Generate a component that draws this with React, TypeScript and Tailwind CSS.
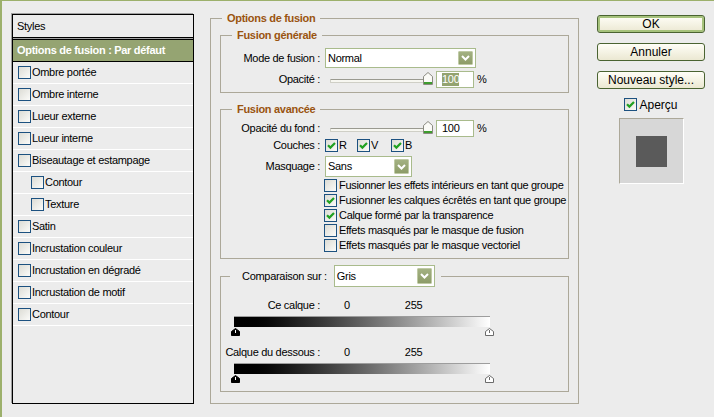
import React from "react";

const styleRows: [string, boolean][] = [
  ["Ombre portée", false],
  ["Ombre interne", false],
  ["Lueur externe", false],
  ["Lueur interne", false],
  ["Biseautage et estampage", false],
  ["Contour", true],
  ["Texture", true],
  ["Satin", false],
  ["Incrustation couleur", false],
  ["Incrustation en dégradé", false],
  ["Incrustation de motif", false],
  ["Contour", false],
];

const maskOptions: [string, boolean][] = [
  ["Fusionner les effets intérieurs en tant que groupe", false],
  ["Fusionner les calques écrêtés en tant que groupe", true],
  ["Calque formé par la transparence", true],
  ["Effets masqués par le masque de fusion", false],
  ["Effets masqués par le masque vectoriel", false],
];

function Check({ on = false }: { on?: boolean }) {
  return (
    <span className="w-[13px] h-[13px] shrink-0 border border-[#1c5180] bg-gradient-to-br from-[#dcdcd5] to-[#fbfbf9] flex items-center justify-center">
      {on && (
        <svg width="9" height="9" viewBox="0 0 9 9">
          <path d="M1 4.2 L3.4 6.6 L8 2" stroke="#21a121" strokeWidth="2.2" fill="none" />
        </svg>
      )}
    </span>
  );
}

function Combo({ value, className }: { value: string; className: string }) {
  return (
    <div className={`flex items-stretch bg-white border border-[#a9bb8c] p-[2px] ${className}`}>
      <span className="flex-1 flex items-center">{value}</span>
      <span className="w-[15px] flex items-center justify-center bg-gradient-to-b from-[#a3b182] to-[#8d9c68] border border-[#bfcaa5] rounded-[1px]">
        <svg width="9" height="6" viewBox="0 0 9 6">
          <path d="M1 1 L4.5 4.5 L8 1" stroke="#fff" strokeWidth="2" fill="none" />
        </svg>
      </span>
    </div>
  );
}

function Slider() {
  return (
    <div className="relative w-[108px] h-[18px]">
      <div className="absolute left-[5px] right-[5px] top-[9px] h-[4px] border border-[#cfcfc6] border-t-[#9a9a90] bg-[#f7f7f1] rounded-[1px]" />
      <svg className="absolute left-[98px] top-[2px]" width="10" height="13" viewBox="0 0 10 13">
        <path d="M0.5 4.5 L5 0.5 L9.5 4.5 V12.5 H0.5 Z" fill="#fbfbf7" stroke="#8a8a80" />
        <rect x="1" y="10" width="8" height="2" fill="#3e9c2e" />
      </svg>
    </div>
  );
}

function Field({ children, highlight = false }: { children: string; highlight?: boolean }) {
  return (
    <div className="ml-[3px] w-[38px] h-[17px] border border-[#a9bb8c] bg-white flex items-center pl-[5px]">
      <span className={highlight ? "bg-[#93a36f] text-white leading-[13px]" : "leading-[13px]"}>{children}</span>
    </div>
  );
}

function Thumb({ dark = false }: { dark?: boolean }) {
  return dark ? (
    <svg width="9" height="8" viewBox="0 0 9 8">
      <path d="M0.5 3.5 L4.5 0.5 L8.5 3.5 V7.5 H0.5 Z" fill="#000" stroke="#000" />
      <rect x="4" y="2" width="1" height="3" fill="#fff" />
    </svg>
  ) : (
    <svg width="9" height="8" viewBox="0 0 9 8">
      <path d="M0.5 3.5 L4.5 0.5 L8.5 3.5 V7.5 H0.5 Z" fill="#fff" stroke="#6b6b6b" />
      <rect x="4" y="2" width="1" height="3" fill="#6b6b6b" />
    </svg>
  );
}

function Ramp() {
  return (
    <>
      <div className="ml-[13px] w-[256px] h-[11px] border-t border-[#9d9d9d] bg-gradient-to-r from-black to-white" />
      <div className="ml-[10px] w-[263px] h-[9px] pt-[1px] flex justify-between">
        <Thumb dark />
        <Thumb />
      </div>
    </>
  );
}

const legend = "font-bold text-[#9a5410] leading-[13px]";

export default function App() {
  return (
    <div className="w-[714px] h-[417px] bg-[#ececec] border-t border-l-2 border-[#9cb06b] flex items-start overflow-hidden text-[11px] text-black font-['Liberation_Sans',Arial,sans-serif] tracking-[-0.3px]">
      {/* styles list */}
      <div className="mt-[13px] ml-[10px] w-[182px] h-[390px] shrink-0 border border-black shadow-[-1px_-1px_0_#a0a0a0] flex flex-col">
        <div className="h-[22px] flex items-center pl-[4px]">Styles</div>
        <div className="h-[3px] border-y border-black bg-[#a0a0a0]" />
        <div className="h-[22px] flex items-center pl-[4px] bg-[#95a472] border-b border-black text-white font-bold">
          Options de fusion : Par défaut
        </div>
        {styleRows.map(([label, sub], i) => (
          <div
            key={i}
            className={`h-[22px] flex items-center gap-[1px] border-b border-white ${sub ? "pl-[18px]" : "pl-[5px]"}`}
          >
            <Check />
            <span>{label}</span>
          </div>
        ))}
      </div>

      {/* options de fusion */}
      <fieldset className="ml-[16px] mt-[11px] w-[369px] h-[392px] shrink-0 border border-[#aca899] pb-[9px]">
        <legend className={`ml-[11px] px-[5px] ${legend}`}>Options de fusion</legend>

        <fieldset className="mx-[9px] mt-[4px] border border-[#aca899] pb-[4px]">
          <legend className={`ml-[11px] px-[5px] ${legend}`}>Fusion générale</legend>
          <div className="mt-[6px] flex items-center">
            <span className="w-[99px] text-right">Mode de fusion :</span>
            <Combo value="Normal" className="ml-[5px] w-[151px] h-[20px]" />
          </div>
          <div className="mt-[2px] flex items-center">
            <span className="w-[99px] text-right">Opacité :</span>
            <span className="ml-[5px] flex items-center">
              <Slider />
              <Field highlight>100</Field>
              <span className="ml-[3px]">%</span>
            </span>
          </div>
        </fieldset>

        <fieldset className="mx-[9px] mt-[10px] border border-[#aca899] pb-[5px]">
          <legend className={`ml-[11px] px-[5px] ${legend}`}>Fusion avancée</legend>
          <div className="mt-[3px] flex items-center">
            <span className="w-[99px] text-right">Opacité du fond :</span>
            <span className="ml-[5px] flex items-center">
              <Slider />
              <Field>100</Field>
              <span className="ml-[3px]">%</span>
            </span>
          </div>
          <div className="h-[17px] flex items-center">
            <span className="w-[99px] text-right">Couches :</span>
            <span className="ml-[5px] w-[32px] flex items-center gap-[1px]">
              <Check on />R
            </span>
            <span className="w-[34px] flex items-center gap-[1px]">
              <Check on />V
            </span>
            <span className="flex items-center gap-[1px]">
              <Check on />B
            </span>
          </div>
          <div className="mt-[2px] flex items-center">
            <span className="w-[99px] text-right">Masquage :</span>
            <Combo value="Sans" className="ml-[5px] w-[87px] h-[21px]" />
          </div>
          <div className="mt-[1px] flex flex-col">
            {maskOptions.map(([label, on], i) => (
              <div key={i} className="h-[15px] ml-[103px] flex items-center gap-[2px] whitespace-nowrap">
                <Check on={on} />
                <span>{label}</span>
              </div>
            ))}
          </div>
        </fieldset>

        <fieldset className="mx-[9px] mt-[6px] border border-[#aca899] pb-[8px]">
          <legend className="ml-[9px] pl-[12px] pr-[6px]">
            <span className="flex items-center">
              <span>Comparaison sur :</span>
              <Combo value="Gris" className="ml-[7px] w-[101px] h-[22px]" />
            </span>
          </legend>
          <div className="mt-[11px] h-[14px] flex items-center">
            <span className="w-[99px] text-right">Ce calque :</span>
            <span className="ml-[24px]">0</span>
            <span className="ml-[55px]">255</span>
          </div>
          <div className="mt-[4px]">
            <Ramp />
          </div>
          <div className="mt-[9px] h-[14px] flex items-center">
            <span className="w-[99px] text-right">Calque du dessous :</span>
            <span className="ml-[24px]">0</span>
            <span className="ml-[55px]">255</span>
          </div>
          <div className="mt-[4px]">
            <Ramp />
          </div>
        </fieldset>
      </fieldset>

      {/* buttons */}
      <div className="ml-[18px] mt-[14px] w-[108px] shrink-0 flex flex-col text-[12px] tracking-normal">
        <button className="h-[18px] rounded-[3px] border border-[#4a6332] bg-gradient-to-b from-[#fffef7] to-[#ebe8d2] shadow-[inset_0_0_0_2px_#a6c27c] leading-none">
          OK
        </button>
        <button className="mt-[10px] h-[18px] rounded-[3px] border border-[#4a6332] bg-gradient-to-b from-[#fffef7] to-[#ebe8d2] leading-none">
          Annuler
        </button>
        <button className="mt-[10px] h-[18px] rounded-[3px] border border-[#4a6332] bg-gradient-to-b from-[#fffef7] to-[#ebe8d2] leading-none">
          Nouveau style...
        </button>
        <div className="mt-[9px] h-[13px] flex items-center justify-center gap-[2px]">
          <Check on />
          <span>Aperçu</span>
        </div>
        <div className="mt-[7px] mx-auto w-[65px] h-[66px] border border-[#aca899] border-r-white border-b-white bg-[#d7d7d7] flex items-center justify-center">
          <div className="w-[31px] h-[31px] bg-[#5a5a5a]" />
        </div>
      </div>
    </div>
  );
}
